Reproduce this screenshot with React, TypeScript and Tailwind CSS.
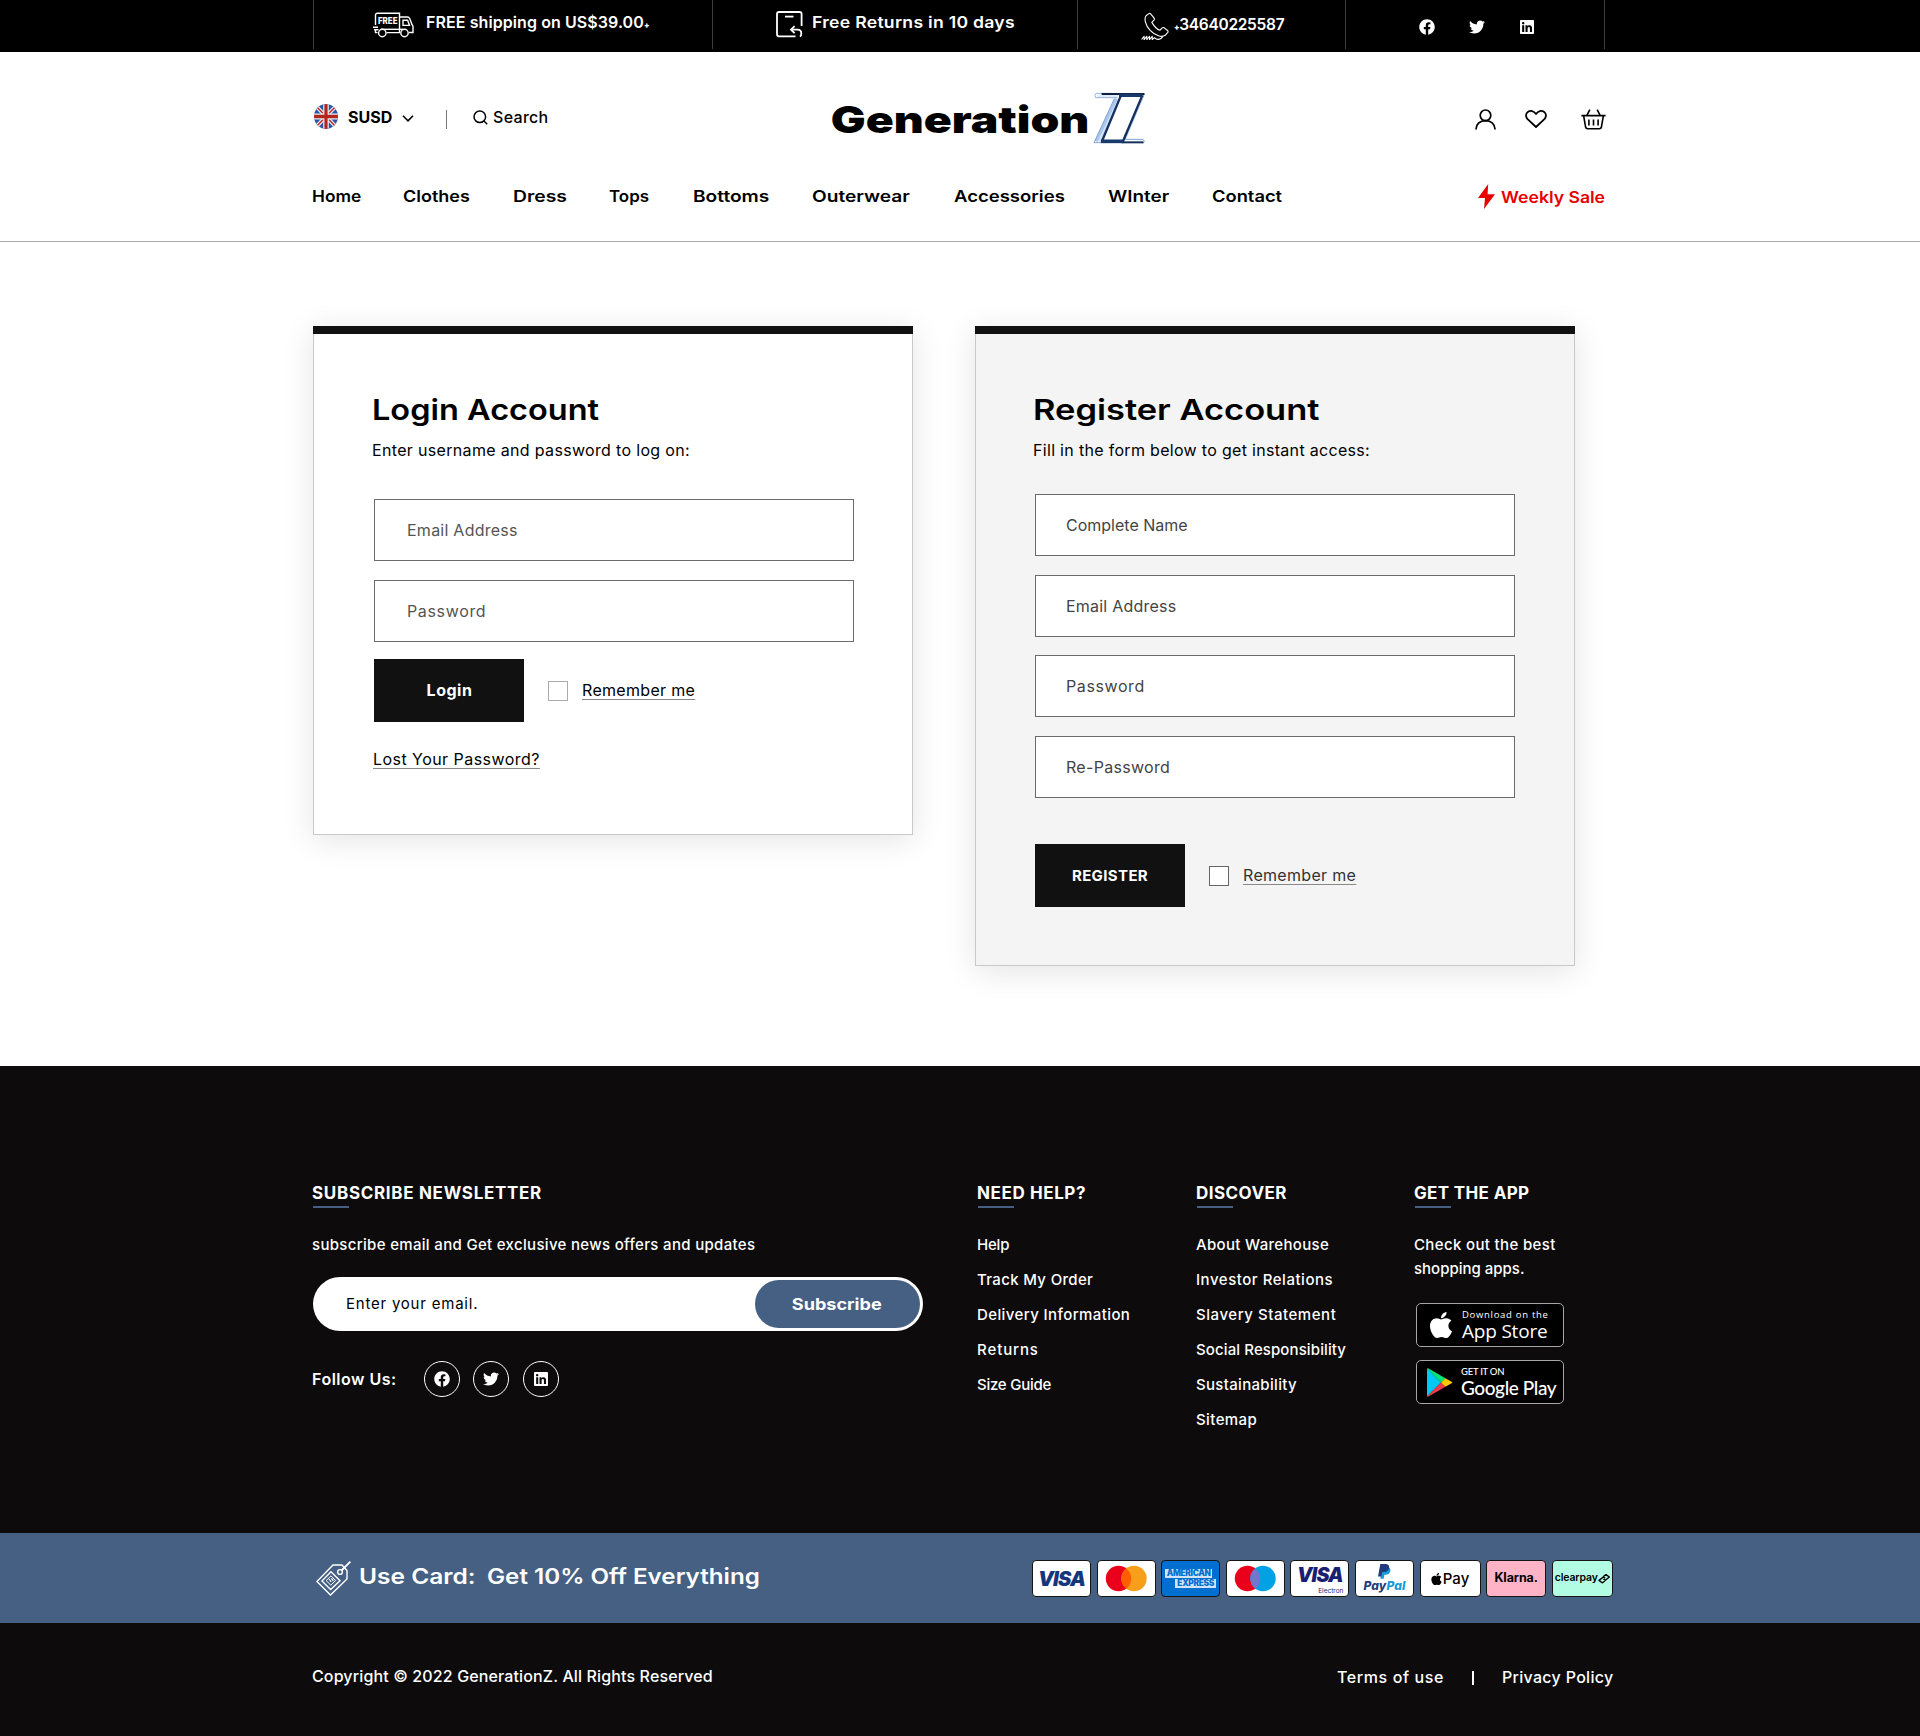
import type { ReactNode } from "react";
import { FaApple, FaFacebook, FaLinkedin, FaTwitter } from "react-icons/fa";

const navItems = [
  { label: "Home", box: "w-[91px]", stretch: "scale-x-[1.08]" },
  { label: "Clothes", box: "w-[110px]", stretch: "scale-x-[1.123]" },
  { label: "Dress", box: "w-[96px]", stretch: "scale-x-[1.21]" },
  { label: "Tops", box: "w-[84px]", stretch: "scale-x-[1.06]" },
  { label: "Bottoms", box: "w-[119px]", stretch: "scale-x-[1.195]" },
  { label: "Outerwear", box: "w-[142px]", stretch: "scale-x-[1.195]" },
  { label: "Accessories", box: "w-[154px]", stretch: "scale-x-[1.157]" },
  { label: "WInter", box: "w-[104px]", stretch: "scale-x-[1.18]" },
  { label: "Contact", box: "w-[90px]", stretch: "scale-x-[1.145]" },
];

const helpLinks = [
  { label: "Help", tracking: "tracking-[-0.2px]" },
  { label: "Track My Order", tracking: "tracking-[0.33px]" },
  { label: "Delivery Information", tracking: "tracking-[0.4px]" },
  { label: "Returns", tracking: "tracking-[0.9px]" },
  { label: "Size Guide", tracking: "tracking-[-0.25px]" },
];

const discoverLinks = [
  { label: "About Warehouse", tracking: "tracking-[0.33px]" },
  { label: "Investor Relations", tracking: "tracking-[0.53px]" },
  { label: "Slavery Statement", tracking: "tracking-[0.55px]" },
  { label: "Social Responsibility", tracking: "tracking-[0.11px]" },
  { label: "Sustainability", tracking: "tracking-[0.32px]" },
  { label: "Sitemap", tracking: "tracking-[0.4px]" },
];

function TruckIcon() {
  return (
    <svg className="h-[26px] w-[41px] shrink-0" viewBox="0 0 41 26" fill="none" stroke="white" strokeWidth="1.4">
      <path d="M2.5 13V3.2Q2.5 1.2 4.5 1.2H26.5V20.5" />
      <path d="M26.5 5H34.5Q36 5 36.7 6.5L39 12.5Q40 13.5 40 15V20.5H36" />
      <path d="M30 8.2H34.6L36.5 13.4H30Z" />
      <path d="M0 15.2H5M1 17.8H5.5M2.5 17.8V20.6H4.5M13.5 20.6H27" />
      <path d="M8 17.3H30" />
      <circle cx="9.3" cy="21" r="3.7" fill="black" />
      <circle cx="31.5" cy="21" r="3.7" fill="black" />
      <text x="5" y="12" fill="white" stroke="none" fontSize="8.6" fontWeight="800" fontFamily="Inter, sans-serif" textLength="19.5" lengthAdjust="spacingAndGlyphs">
        FREE
      </text>
    </svg>
  );
}

function ReturnIcon() {
  return (
    <svg className="h-[27px] w-[27px] shrink-0" viewBox="0 0 27 27" fill="none" stroke="white" strokeWidth="1.8">
      <path d="M19.5 25.3H3Q1 25.3 1 23.3V3Q1 1 3 1H23.5Q25.6 1 25.6 3V15" />
      <path d="M9 5.6H17.5" />
      <path d="M15 18.7H21.5Q25.3 18.7 25.3 22.4Q25.3 24.5 24 25.6" />
      <path d="M18.6 15.2L15 18.7L18.6 22.2" />
    </svg>
  );
}

function PhoneIcon() {
  return (
    <svg className="h-[29px] w-[28px] shrink-0" viewBox="0 0 29 29" fill="none" stroke="white" strokeWidth="1.15" strokeLinejoin="round">
      <path d="M8.2 1.2L5.2 3.4C3.2 6 4 12.5 9.5 18.6C15 24.3 21.6 26 25 23.6L27.8 20.6Q28.4 19.5 27.5 18.6L24 15.9Q22.8 15.2 21.8 16.1L19.5 18.4Q15.6 17.4 11.2 10.2L13.6 7.6Q14.2 6.7 13.4 5.6L10 1.5Q9 .6 8.2 1.2Z" />
      <path d="M.6 28L3.2 24.6V28L6 24.6V28L8.8 24.6V28L11.6 24.6V28L14 26C16 28.6 20.5 28.6 22.5 25" />
    </svg>
  );
}

function FlagIcon() {
  return (
    <svg className="mt-3 h-[25px] w-[24px]" viewBox="0 0 24 24" preserveAspectRatio="none">
      <clipPath id="flag-round">
        <circle cx="12" cy="12" r="12" />
      </clipPath>
      <g clipPath="url(#flag-round)">
        <rect width="24" height="24" fill="#2a57a5" />
        <path d="M0 0L24 24M24 0L0 24" stroke="#e8edf6" strokeWidth="3.8" />
        <path d="M0 0L24 24M24 0L0 24" stroke="#c0281f" strokeWidth="1.4" />
        <path d="M12 0V24M0 12H24" stroke="#e8edf6" strokeWidth="5.6" />
        <path d="M12 0V24M0 12H24" stroke="#b3261e" strokeWidth="3.2" />
      </g>
    </svg>
  );
}

function LogoZ() {
  return (
    <svg className="h-[52px] w-[54px] shrink-0" viewBox="0 0 160 156" fill="none">
      <path d="M12 4H60M10 17H76M12 4Q4 10 10 17" stroke="#8fb0de" strokeWidth="3" />
      <path d="M14 12H78" stroke="#dbe8fa" strokeWidth="5" />
      <path d="M72 20L12 148" stroke="#a9c6ef" strokeWidth="10" />
      <path d="M66 20L5 152H26" stroke="#6f92c6" strokeWidth="2.5" />
      <path d="M80 20L22 148" stroke="#c9dcf7" strokeWidth="5" />
      <path d="M157 4L98 142H152Q160 148 152 154" stroke="#7fa3d8" strokeWidth="3" />
      <path d="M152 16L100 140" stroke="#b9d0f2" strokeWidth="3" />
      <path d="M28 6H156" stroke="#0f1f3d" strokeWidth="6" />
      <path d="M80 10H151" stroke="#173a6b" strokeWidth="10" />
      <path d="M86 10L28 150" stroke="#14315e" strokeWidth="7" />
      <path d="M150 10L91 150" stroke="#14315e" strokeWidth="7" />
      <path d="M26 148H92" stroke="#173a6b" strokeWidth="11" />
      <path d="M88 151H153" stroke="#14315e" strokeWidth="6" />
    </svg>
  );
}

function TagIcon() {
  return (
    <svg className="h-[35px] w-[35px] shrink-0" viewBox="0 0 35 35" fill="none" stroke="white" strokeWidth="1.4">
      <path d="M17 4H26L31 9.5V18L14.5 34L.9 20.5Z" />
      <path d="M15 10.7L24 19.7L14.6 28.6L6 20Z" />
      <path d="M15 14.8L19.6 19.5L14.8 24.2L10.2 19.6Z" strokeWidth="1" />
      <path d="M13 18L15.2 20.8M15.4 17.4L17.4 19.8" strokeWidth="1.2" />
      <circle cx="24" cy="11" r="2.4" />
      <path d="M25.5 9.5L34.4 .6" strokeWidth="1.8" />
    </svg>
  );
}

function Heading({ children, tracking }: { children: ReactNode; tracking: string }) {
  return (
    <>
      <h3 className={`h-6 text-[17px] leading-6 font-bold whitespace-nowrap ${tracking}`}>{children}</h3>
      <div className="mt-px mb-[25px] ml-px h-0.5 w-9 bg-[#456083]" />
    </>
  );
}

function Field({ label, className, tracking }: { label: string; className: string; tracking: string }) {
  return (
    <div className={`flex h-[62px] w-[480px] items-center border border-[#6b6b6b] bg-white ${className}`}>
      <span className={`text-base ${tracking}`}>{label}</span>
    </div>
  );
}

const cardBase = "flex h-[37px] items-center justify-center overflow-hidden rounded-[4px] border border-[#151515] text-center whitespace-nowrap";

function Payments() {
  return (
    <div className="flex gap-[5.6px]">
      <div className={`${cardBase} w-[59px] bg-white`}>
        <span className="text-[20px] leading-none font-black tracking-[-0.8px] text-[#16367c] italic">VISA</span>
      </div>
      <div className={`${cardBase} w-[59px] bg-white`}>
        <svg className="h-[27px] w-[43px]" viewBox="0 0 43 27">
          <circle cx="13.5" cy="13.5" r="12.7" fill="#eb001b" />
          <circle cx="29" cy="13.5" r="12.7" fill="#f79e1b" />
          <path d="M21.3 3.4a12.7 12.7 0 0 1 0 20.2a12.7 12.7 0 0 1 0-20.2" fill="#ff5f00" />
        </svg>
      </div>
      <div className={`${cardBase} w-[59px] flex-col !items-stretch bg-[#016fd0] px-[3px] text-[#016fd0]`}>
        <span className="mr-1 h-[9px] bg-[#cfe4f7] text-[8.3px] leading-[9px] font-black tracking-[-0.3px]">AMERICAN</span>
        <span className="mt-px ml-2.5 h-[9px] bg-[#cfe4f7] text-[8.3px] leading-[9px] font-black tracking-[-0.3px]">EXPRESS</span>
      </div>
      <div className={`${cardBase} w-[59px] bg-white`}>
        <svg className="h-[27px] w-[43px]" viewBox="0 0 43 27">
          <circle cx="13.5" cy="13.5" r="12.7" fill="#eb001b" />
          <circle cx="29" cy="13.5" r="12.7" fill="#00a2e5" />
          <path d="M21.3 3.4a12.7 12.7 0 0 1 0 20.2a12.7 12.7 0 0 1 0-20.2" fill="#7375cf" />
        </svg>
      </div>
      <div className={`${cardBase} w-[59px] flex-col bg-white text-[#1a1f71]`}>
        <span className="text-[19.5px] leading-[24px] font-black tracking-[-0.8px] italic">VISA</span>
        <span className="mr-[5px] self-end text-[6.5px] leading-[8px]">Electron</span>
      </div>
      <div className={`${cardBase} w-[59px] flex-col bg-white`}>
        <svg className="h-[15px] w-[13px]" viewBox="0 0 13 15">
          <path d="M4.2 3H10.5Q13 4.3 12.3 7.2Q11.3 10.8 7.5 10.8H6.4L5.7 14.8H2.4Z" fill="#169bd7" />
          <path d="M2.3 0H8Q11.8 .4 11 4.2Q10 8 6 8H4.2L3.3 12.6H0Z" fill="#253b80" />
        </svg>
        <span className="text-[12px] leading-[14px] font-extrabold tracking-[0.1px] text-[#253b80] italic">
          Pay<span className="text-[#169bd7]">Pal</span>
        </span>
      </div>
      <div className={`${cardBase} w-[61px] bg-white text-black`}>
        <FaApple className="h-[14px] w-[11px]" />
        <span className="ml-px text-[15px] leading-none font-medium">Pay</span>
      </div>
      <div className={`${cardBase} w-[60px] bg-[#ffb3c7] text-black`}>
        <span className="text-[12.5px] leading-none font-bold tracking-[-0.1px]">Klarna.</span>
      </div>
      <div className={`${cardBase} w-[61px] bg-[#b2fce4] text-black`}>
        <span className="text-[10.5px] leading-none font-semibold tracking-[-0.15px]">clearpay</span>
        <svg className="h-[11px] w-[12px] shrink-0" viewBox="0 0 12 11" fill="none" stroke="black" strokeWidth="1.4" strokeLinejoin="round">
          <path d="M5 3.8L8 1.6L11.3 4L7.4 7.2L5.4 6" />
          <path d="M7.2 5.2L5.4 4L1 7.4L4.2 9.8L7 8" />
        </svg>
      </div>
    </div>
  );
}

const social = [FaFacebook, FaTwitter, FaLinkedin];

export default function App() {
  return (
    <div className="h-[1736px] w-[1920px] overflow-hidden bg-white font-['Inter',sans-serif] text-black">
      {/* Announcement bar */}
      <div className="flex h-[52px] bg-black pl-[313px] text-base leading-6 font-semibold text-white">
        <div className="flex h-[49px] w-[399px] border-l border-[#3c3c3c] pl-[59px]">
          <div className="mt-3"><TruckIcon /></div>
          <span className="mt-2.5 ml-[12px] tracking-[0.08px] whitespace-nowrap">
            FREE shipping on US$39.00<span className="text-[8px] font-black">+</span>
          </span>
        </div>
        <div className="flex h-[49px] w-[365px] border-l border-[#3c3c3c] pl-[63px]">
          <div className="mt-[11px]"><ReturnIcon /></div>
          <span className="mt-2.5 ml-[9px] origin-left scale-x-[1.1] tracking-[0.25px] whitespace-nowrap">Free Returns in 10 days</span>
        </div>
        <div className="flex h-[49px] w-[268px] border-l border-[#3c3c3c] pl-[63px]">
          <div className="mt-3"><PhoneIcon /></div>
          <span className="mt-[13px] ml-[5px] text-[15.5px] tracking-[-0.3px] whitespace-nowrap">
            <span className="text-[8px] font-black">+</span>34640225587
          </span>
        </div>
        <div className="flex h-[49px] w-[260px] gap-[34px] border-x border-[#3c3c3c] pt-[19px] pl-[73px]">
          {social.map((Icon, i) => (
            <Icon key={i} className="size-4" />
          ))}
        </div>
      </div>

      {/* Header */}
      <header className="h-[190px] border-b border-[#a9a9a9] pt-10 pl-[313px]">
        <div className="flex h-[52px] w-[1294px] items-start">
          <div className="flex w-[519px] pl-px">
            <FlagIcon />
            <span className="mt-[13px] ml-2.5 w-[54px] text-base leading-6 font-bold">SUSD</span>
            <svg className="mt-[23px] h-[7px] w-[12px]" viewBox="0 0 12 7" fill="none" stroke="black" strokeWidth="1.6">
              <path d="M1 .8L6 5.8L11 .8" />
            </svg>
            <div className="mt-[18px] ml-[32px] h-[19px] w-px bg-[#777]" />
            <svg className="mt-[18px] ml-[26px] h-[15px] w-[15px]" viewBox="0 0 15 15" fill="none" stroke="black" strokeWidth="1.5">
              <circle cx="6.8" cy="6.8" r="5.8" />
              <path d="M11 11L14.2 14.2" />
            </svg>
            <span className="mt-[13px] ml-[5px] text-base leading-6 font-medium tracking-[0.3px]">Search</span>
          </div>
          <div className="flex w-[643px] pr-[384px]">
            <span className="mt-[10px] w-[260px] shrink-0 origin-left scale-x-[1.25] text-[37px] leading-9 font-black">
              <span className="-ml-px">Generation</span>
            </span>
            <LogoZ />
          </div>
          <svg className="mt-[17px] h-[21px] w-[21px]" viewBox="0 0 21 21" fill="none" stroke="black" strokeWidth="1.7">
            <circle cx="10.5" cy="6.3" r="5.3" />
            <path d="M1 20.6V20Q1.8 12 10.5 11.6Q19.2 12 20 20V20.6" />
          </svg>
          <svg className="mt-[18px] ml-[29px] h-[18px] w-[22px]" viewBox="0 0 22 18" fill="none" stroke="black" strokeWidth="1.8" strokeLinejoin="round">
            <path d="M11 17L2.6 9.2C.2 6.6 .8 3.4 2.8 2C5.4 .1 8.8 .8 11 4C13.2 .8 16.6 .1 19.2 2C21.2 3.4 21.8 6.6 19.4 9.2Z" />
          </svg>
          <svg className="mt-[17px] ml-[34px] h-[21px] w-[25px]" viewBox="0 0 25 21" fill="none" stroke="black" strokeWidth="1.6">
            <path d="M.4 6.6H24.6M2.6 6.6L4.6 18Q4.9 19.7 6.6 19.7H18.4Q20.1 19.7 20.4 18L22.4 6.6" />
            <path d="M8.8 .6L5.8 6.6M16.2 .6L19.2 6.6" />
            <path d="M7.9 10.4V16.4M12.5 10.4V16.4M17.1 10.4V16.4" />
          </svg>
        </div>
        <div className="mt-10 -ml-px flex text-base leading-6 font-semibold">
          <nav className="flex w-[1166px]">
            {navItems.map((n) => (
              <div key={n.label} className={n.box}>
                <span className={`inline-block origin-left ${n.stretch}`}>{n.label}</span>
              </div>
            ))}
          </nav>
          <svg className="h-[25px] w-[17px]" viewBox="0 0 17 25" fill="#e60000">
            <path d="M10.2 0L0 14H7L6 25L17 10.2H9.6Z" />
          </svg>
          <span className="mt-px ml-[6px] origin-left scale-x-[1.1] whitespace-nowrap text-[#e60000]">Weekly Sale</span>
        </div>
      </header>

      {/* Account forms */}
      <main className="flex h-[824px] items-start gap-[62px] pt-[84px] pl-[313px]">
        <section className="w-[600px] shadow-[0_5px_30px_rgba(0,0,0,0.11)]">
          <div className="h-2 bg-[#111]" />
          <div className="h-[501px] border border-t-0 border-[#c9c9c9] bg-white pt-[58px] pl-[60px]">
            <h2 className="-ml-[2px] h-9 origin-left scale-x-[1.12] text-[29px] leading-9 font-semibold">Login Account</h2>
            <p className="mt-[10px] -ml-[2px] text-base leading-6 tracking-[0.33px]">Enter username and password to log on:</p>
            <div className="mt-[37px] flex flex-col gap-[19px] text-[#555]">
              <Field label="Email Address" className="pl-8" tracking="tracking-[0.25px]" />
              <Field label="Password" className="pl-8" tracking="tracking-[0.65px]" />
            </div>
            <div className="mt-[17px] flex h-[63px] items-center">
              <div className="flex h-full w-[150px] items-center justify-center bg-[#111] pb-0.5 pl-px text-base font-bold tracking-[0.5px] text-white">Login</div>
              <div className="mt-px ml-6 size-5 border border-[#ababab]" />
              <span className="-mt-px ml-[14px] text-base leading-6 tracking-[0.32px] underline decoration-[#888] decoration-1 underline-offset-[3px] [text-decoration-skip-ink:none]">Remember me</span>
            </div>
            <p className="mt-[25px] -ml-px text-base leading-6 tracking-[0.45px] underline decoration-[#888] decoration-1 underline-offset-[3px] [text-decoration-skip-ink:none]">Lost Your Password?</p>
          </div>
        </section>

        <section className="w-[600px] shadow-[0_5px_30px_rgba(0,0,0,0.11)]">
          <div className="h-2 bg-[#111]" />
          <div className="h-[632px] border border-t-0 border-[#c9c9c9] bg-[#f4f4f4] pt-[58px] pl-[59px]">
            <h2 className="-ml-[2px] h-9 origin-left scale-x-[1.188] text-[29px] leading-9 font-semibold">Register Account</h2>
            <p className="mt-[10px] -ml-[2px] text-base leading-6 tracking-[0.31px]">Fill in the form below to get instant access:</p>
            <div className="mt-8 flex flex-col text-[#444]">
              <Field label="Complete Name" className="pl-[30px]" tracking="tracking-[0px]" />
              <Field label="Email Address" className="mt-[19px] pl-[30px]" tracking="tracking-[0.22px]" />
              <Field label="Password" className="mt-[18px] pl-[30px]" tracking="tracking-[0.6px]" />
              <Field label="Re-Password" className="mt-[19px] pl-[30px]" tracking="tracking-[0.3px]" />
            </div>
            <div className="mt-[46px] flex h-[63px] items-center">
              <div className="flex h-full w-[150px] items-center justify-center bg-[#111] pt-0.5 text-[15px] font-bold tracking-[0.37px] text-white">REGISTER</div>
              <div className="ml-6 size-5 border border-[#666] bg-white" />
              <span className="-mt-px ml-[14px] text-base leading-6 tracking-[0.32px] text-[#333] underline decoration-[#888] decoration-1 underline-offset-[3px] [text-decoration-skip-ink:none]">Remember me</span>
            </div>
          </div>
        </section>
      </main>

      {/* Footer */}
      <footer className="h-[670px] bg-[#0d0b0c] text-white">
        <div className="flex h-[467px] pt-[115px] pl-[312px] text-[15px] leading-6 font-medium">
          <div className="w-[665px]">
            <Heading tracking="tracking-[0.69px]">SUBSCRIBE NEWSLETTER</Heading>
            <p className="tracking-[0.32px]">subscribe email and Get exclusive news offers and updates</p>
            <div className="mt-5 ml-px flex h-[54px] w-[610px] items-center justify-between rounded-full bg-white pr-[3px] pl-[33px] text-black">
              <span className="font-normal tracking-[0.78px]">Enter your email.</span>
              <div className="flex h-12 w-[165px] items-center justify-center rounded-full bg-[#456083] pr-px text-base font-bold text-white">
                <span className="scale-x-[1.13]">Subscribe</span>
              </div>
            </div>
            <div className="mt-[30px] flex h-9">
              <span className="mt-1.5 w-[112px] text-base leading-6 font-semibold tracking-[0.5px]">Follow Us:</span>
              <div className="flex gap-[13.3px]">
                {social.map((Icon, i) => (
                  <div key={i} className="flex size-9 items-center justify-center rounded-full border border-white">
                    <Icon className="size-4" />
                  </div>
                ))}
              </div>
            </div>
          </div>
          <div className="w-[219px]">
            <Heading tracking="tracking-[0.6px]">NEED HELP?</Heading>
            <ul className="flex flex-col gap-[11px]">
              {helpLinks.map((l) => (
                <li key={l.label} className={l.tracking}>{l.label}</li>
              ))}
            </ul>
          </div>
          <div className="w-[218px]">
            <Heading tracking="tracking-[0.45px]">DISCOVER</Heading>
            <ul className="flex flex-col gap-[11px]">
              {discoverLinks.map((l) => (
                <li key={l.label} className={l.tracking}>{l.label}</li>
              ))}
            </ul>
          </div>
          <div>
            <Heading tracking="tracking-[0.35px]">GET THE APP</Heading>
            <p className="tracking-[0.35px]">Check out the best</p>
            <p>shopping apps.</p>
            <div className="mt-[22px] ml-0.5 flex h-11 w-[148px] items-center rounded-[5px] border border-[#a6a6a6] bg-black pl-[12px]">
              <FaApple className="h-[30px] w-[24px] shrink-0" />
              <div className="ml-[9px] flex flex-col font-['Open_Sans',sans-serif] whitespace-nowrap">
                <span className="text-[9.5px] leading-[12px] font-medium tracking-[0.7px]">Download on the</span>
                <span className="text-[19px] leading-[21px] font-medium tracking-[-0.2px]">App Store</span>
              </div>
            </div>
            <div className="mt-[13px] ml-0.5 flex h-11 w-[148px] items-center rounded-[5px] border border-[#a6a6a6] bg-black pl-2.5">
              <svg className="h-[29px] w-[26px] shrink-0" viewBox="0 0 26 29">
                <path d="M0 .6V28.4L14 14.5Z" fill="#00c8f5" />
                <path d="M0 .6Q.6 0 1.6 .5L18.4 10.2L14 14.5Z" fill="#00e676" />
                <path d="M0 28.4Q.6 29 1.6 28.5L18.4 18.8L14 14.5Z" fill="#f03a4b" />
                <path d="M18.4 10.2L25 13.9Q25.8 14.5 25 15.1L18.4 18.8L14 14.5Z" fill="#ffc900" />
              </svg>
              <div className="ml-2 flex flex-col font-['Lato',sans-serif] whitespace-nowrap">
                <span className="text-[9.5px] leading-[11px] font-medium tracking-[-0.25px]">GET IT ON</span>
                <span className="text-[19px] leading-[21px] font-medium tracking-[-0.4px]">Google Play</span>
              </div>
            </div>
          </div>
        </div>

        {/* Promo band */}
        <div className="flex h-[90px] bg-[#456083] pl-[316px]">
          <div className="mt-[28px]"><TagIcon /></div>
          <div className="mt-7 ml-2 flex w-[673px] text-[21.5px] leading-[30px] font-semibold whitespace-nowrap">
            <span className="w-[128px] origin-left scale-x-[1.14]">Use Card:</span>
            <span className="origin-left scale-x-[1.124]">Get 10% Off Everything</span>
          </div>
          <div className="mt-[27px]"><Payments /></div>
        </div>

        <div className="flex h-[113px] pt-[41px] pl-[312px] text-base leading-6 font-medium">
          <span className="w-[1025px] tracking-[0.13px]">Copyright © 2022 GenerationZ. All Rights Reserved</span>
          <span className="mt-px w-[135px] tracking-[0.6px]">Terms of use</span>
          <div className="mt-[7px] h-[14px] w-0.5 bg-white" />
          <span className="mt-px ml-[28px] tracking-[0.3px]">Privacy Policy</span>
        </div>
      </footer>
    </div>
  );
}
